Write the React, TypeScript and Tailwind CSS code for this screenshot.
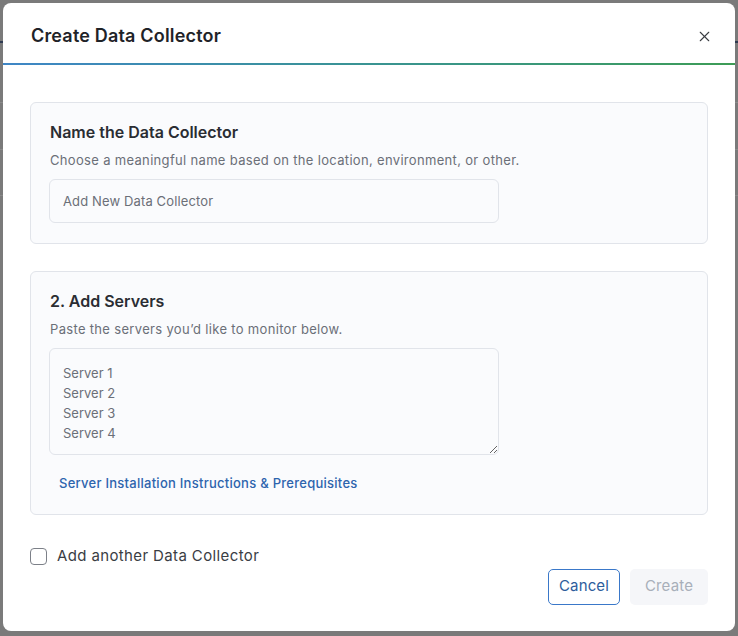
import React from 'react';
import { X } from 'lucide-react';

const SERVERS = 'Server 1\nServer 2\nServer 3\nServer 4';

const SectionCard: React.FC<{ title: string; subtitle: string; children: React.ReactNode }> = ({
  title,
  subtitle,
  children,
}) => (
  <div className="rounded-md border border-[#e1e4ea] bg-[#fafbfd] px-[18px] pt-[18px] pb-[20px]">
    <h3 className="pl-[1px] text-[16px] font-semibold leading-[22px] text-[#2a2d33]">{title}</h3>
    <p className="mt-[8px] pl-[1px] text-[13px] leading-[18px] tracking-[0.025em] text-[#6b6f78]">{subtitle}</p>
    {children}
  </div>
);

export default function App() {
  return (
    <div
      className="relative h-[636px] w-[738px] overflow-hidden bg-[#7a7a7a]"
      style={{ fontFamily: 'Inter, "Noto Sans", sans-serif' }}
    >
      {/* page behind the overlay */}
      <div className="flex flex-col">
        <div className="h-[41px]" />
        <div className="h-[2px] bg-[#2f3b52]" />
        <div className="h-[60px] border-b border-[#8a8a8a]" />
        <div className="h-[47px] border-b border-[#8a8a8a]" />
        <div className="h-[46px] border-b border-[#8a8a8a]" />
      </div>

      <div className="absolute left-[3px] top-[3px] flex h-[628px] w-[732px] flex-col rounded-lg bg-white">
        <div className="flex h-[60px] items-center justify-between pl-[28px] pr-[22px] pt-[4px]">
          <h2 className="text-[18px] font-semibold tracking-[0.01em] text-[#1f2328]">Create Data Collector</h2>
          <button className="mt-[2px] text-[#3a3d42]">
            <X size={17} strokeWidth={1.5} />
          </button>
        </div>
        <div className="h-[2px] bg-gradient-to-r from-[#3f86c6] to-[#3d9c55]" />

        <div className="flex flex-1 flex-col px-[27px] pt-[37px]">
          <SectionCard
            title="Name the Data Collector"
            subtitle="Choose a meaningful name based on the location, environment, or other."
          >
            <input
              placeholder="Add New Data Collector"
              className="mt-[10px] h-[44px] w-[450px] rounded-md border border-[#e1e4ea] bg-[#fafbfd] px-[13px] text-[13px] tracking-[0.01em] text-[#3a3d42] outline-none placeholder:text-[#6b6f78]"
            />
          </SectionCard>

          <div className="h-[27px]" />

          <SectionCard title="2. Add Servers" subtitle="Paste the servers you’d like to monitor below.">
            <textarea
              defaultValue={SERVERS}
              className="mt-[10px] block h-[107px] w-[450px] resize rounded-md border border-[#e1e4ea] bg-[#fafbfd] px-[13px] pt-[14px] text-[13px] leading-[20px] text-[#6b6f78] outline-none"
            />
            <a
              href="#"
              className="mt-[19px] ml-[10px] inline-block text-[13px] font-medium tracking-[0.02em] text-[#2d64ad]"
            >
              Server Installation Instructions &amp; Prerequisites
            </a>
          </SectionCard>

          <label className="mt-[30px] flex items-center gap-[10px]">
            <span className="h-[17px] w-[17px] rounded-[4px] border border-[#7c8088] bg-white" />
            <span className="text-[15px] tracking-[0.025em] text-[#3a3d44]">Add another Data Collector</span>
          </label>

          <div className="mt-[1px] flex justify-end gap-[10px]">
            <button className="h-[36px] w-[72px] rounded-[5px] border border-[#3a78c9] text-[15px] tracking-[0.01em] text-[#2d5d9c]">
              Cancel
            </button>
            <button className="h-[36px] w-[78px] rounded-[5px] bg-[#f5f6f9] text-[15px] tracking-[0.01em] text-[#a8afba]">
              Create
            </button>
          </div>
        </div>
      </div>
    </div>
  );
}
